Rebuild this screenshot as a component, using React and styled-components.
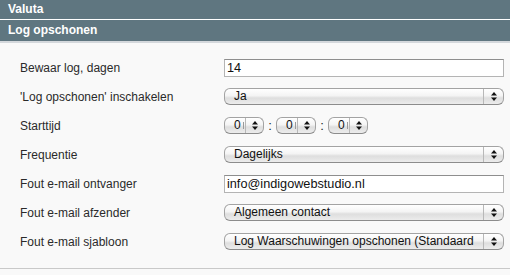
import React from "react";
import styled, { createGlobalStyle } from "styled-components";

const Global = createGlobalStyle`
  html, body { margin: 0; padding: 0; background: #f9f9f9; }
  body { font-family: "Liberation Sans", Arial, sans-serif; }
`;

const Page = styled.div`
  width: 510px;
  height: 275px;
  background: #f9f9f9;
  overflow: hidden;
`;

const SectionBar = styled.div`
  height: ${(p) => p.$h}px;
  background: #5f7680;
  color: #fff;
  font-weight: bold;
  font-size: 12px;
  line-height: ${(p) => p.$h}px;
  padding-left: 8px;
  border-bottom: ${(p) => (p.$last ? "2px solid #d4d8dc" : "1px solid #ffffff")};
`;

const Content = styled.div`
  padding: 10px 0 12px 20px;
  border-bottom: 1px solid #c9c9c9;
`;

const Row = styled.div`
  display: grid;
  grid-template-columns: 204px 280px;
  align-items: center;
  height: 29px;
`;

const Label = styled.div`
  font-size: 12px;
  color: #2a2a2a;
`;

const TextInput = styled.div`
  box-sizing: border-box;
  height: 18px;
  width: 280px;
  border: 1px solid #b4b4b4;
  border-top-color: #8e8e8e;
  background: #fff;
  font-size: 12.7px;
  line-height: 16px;
  padding-left: 2px;
  color: #111;
  overflow: hidden;
  white-space: nowrap;
`;

const Select = styled.div`
  box-sizing: border-box;
  display: flex;
  align-items: stretch;
  height: 17px;
  width: ${(p) => p.$w}px;
  border: 1px solid #a3a3a3;
  border-bottom-color: #8c8c8c;
  border-radius: 6px;
  background: linear-gradient(#ffffff 0%, #f4f4f4 45%, #dedede 60%, #ececec 100%);
  overflow: hidden;
`;

const SelectText = styled.div`
  flex: 1;
  min-width: 0;
  display: flex;
  align-items: center;
  font-size: 12px;
  line-height: 15px;
  padding-left: ${(p) => p.$pad}px;
  color: #111;
  white-space: nowrap;
  overflow: hidden;
  border-right: 1px solid #b8b8b8;
`;

const Sliver = styled.span`
  display: inline-block;
  width: 1px;
  height: 7px;
  margin-left: 2px;
  background: #9a9a9a;
`;

const ArrowBox = styled.div`
  width: ${(p) => p.$w}px;
  display: flex;
  align-items: center;
  justify-content: center;
`;

const TimeRow = styled.div`
  display: flex;
  align-items: center;
`;

const Colon = styled.span`
  font-size: 13px;
  color: #222;
  width: 12px;
  text-align: center;
`;

const Arrows = () => (
  <svg width="6" height="9" viewBox="0 0 6 9">
    <path d="M3 0 L6 3.5 L0 3.5 Z" fill="#111" />
    <path d="M0 5.5 L6 5.5 L3 9 Z" fill="#111" />
  </svg>
);

const SelectBox = ({ value, w = 280, pad = 9, arrowW = 19 }) => (
  <Select $w={w}>
    <SelectText $pad={pad}>{value}</SelectText>
    <ArrowBox $w={arrowW}>
      <Arrows />
    </ArrowBox>
  </Select>
);

const TimeSelect = () => (
  <Select $w={40}>
    <SelectText $pad={9}>
      0<Sliver />
    </SelectText>
    <ArrowBox $w={17}>
      <Arrows />
    </ArrowBox>
  </Select>
);

export default function App() {
  return (
    <Page>
      <Global />
      <SectionBar $h={19}>Valuta</SectionBar>
      <SectionBar $h={21} $last>Log opschonen</SectionBar>
      <Content>
        <Row>
          <Label>Bewaar log, dagen</Label>
          <TextInput>14</TextInput>
        </Row>
        <Row>
          <Label>'Log opschonen' inschakelen</Label>
          <SelectBox value="Ja" />
        </Row>
        <Row>
          <Label>Starttijd</Label>
          <TimeRow>
            <TimeSelect />
            <Colon>:</Colon>
            <TimeSelect />
            <Colon>:</Colon>
            <TimeSelect />
          </TimeRow>
        </Row>
        <Row>
          <Label>Frequentie</Label>
          <SelectBox value="Dagelijks" />
        </Row>
        <Row>
          <Label>Fout e-mail ontvanger</Label>
          <TextInput>info@indigowebstudio.nl</TextInput>
        </Row>
        <Row>
          <Label>Fout e-mail afzender</Label>
          <SelectBox value="Algemeen contact" />
        </Row>
        <Row>
          <Label>Fout e-mail sjabloon</Label>
          <SelectBox value="Log Waarschuwingen opschonen (Standaard" />
        </Row>
      </Content>
    </Page>
  );
}
